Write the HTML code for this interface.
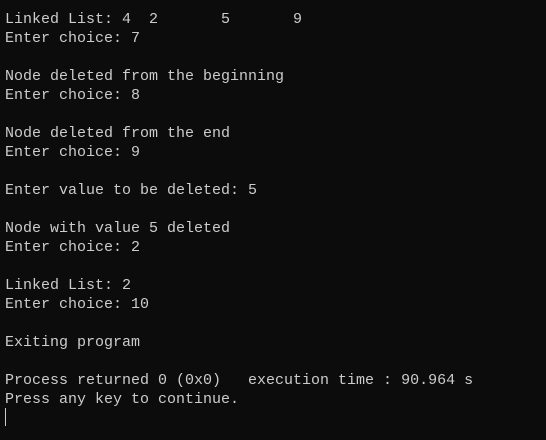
<!DOCTYPE html>
<html><head><style>
html,body{margin:0;padding:0;background:#0c0c0c;width:546px;height:440px;overflow:hidden}
pre{margin:0;position:absolute;left:5px;top:10px;font-family:"Liberation Mono",monospace;font-size:15px;line-height:19px;color:#cccccc;tab-size:8;-moz-tab-size:8}
.cur{position:absolute;left:5px;top:408px;width:1px;height:18px;background:#cccccc}
</style></head><body>
<pre>Linked List: 4	2	5	9
Enter choice: 7

Node deleted from the beginning
Enter choice: 8

Node deleted from the end
Enter choice: 9

Enter value to be deleted: 5

Node with value 5 deleted
Enter choice: 2

Linked List: 2
Enter choice: 10

Exiting program

Process returned 0 (0x0)   execution time : 90.964 s
Press any key to continue.</pre>
<div class="cur"></div>
</body></html>
